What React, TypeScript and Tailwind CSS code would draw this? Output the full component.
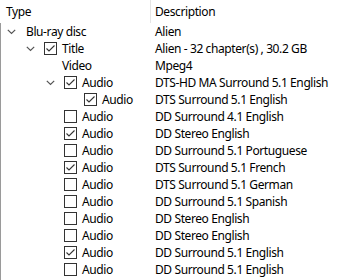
import React from "react";

interface Row {
  level: number;
  expander?: boolean;
  check?: boolean | null;
  type: string;
  desc: string;
}

const rows: Row[] = [
  { level: 0, expander: true, type: "Blu-ray disc", desc: "Alien" },
  { level: 1, expander: true, check: true, type: "Title", desc: "Alien - 32 chapter(s) , 30.2 GB" },
  { level: 1, check: null, type: "Video", desc: "Mpeg4" },
  { level: 2, expander: true, check: true, type: "Audio", desc: "DTS-HD MA Surround 5.1 English" },
  { level: 3, check: true, type: "Audio", desc: "DTS Surround 5.1 English" },
  { level: 2, check: false, type: "Audio", desc: "DD Surround 4.1 English" },
  { level: 2, check: true, type: "Audio", desc: "DD Stereo English" },
  { level: 2, check: false, type: "Audio", desc: "DD Surround 5.1 Portuguese" },
  { level: 2, check: true, type: "Audio", desc: "DTS Surround 5.1 French" },
  { level: 2, check: false, type: "Audio", desc: "DTS Surround 5.1 German" },
  { level: 2, check: false, type: "Audio", desc: "DD Surround 5.1 Spanish" },
  { level: 2, check: false, type: "Audio", desc: "DD Stereo English" },
  { level: 2, check: false, type: "Audio", desc: "DD Stereo English" },
  { level: 2, check: true, type: "Audio", desc: "DD Surround 5.1 English" },
  { level: 2, check: false, type: "Audio", desc: "DD Surround 5.1 English" },
  // only the top of this row's checkbox shows
  { level: 2, check: false, type: "", desc: "" },
];

function Chevron() {
  return (
    <svg width="9" height="6" viewBox="0 0 9 6" className="block">
      <path d="M0.8 0.8 L4.5 4.5 L8.2 0.8" fill="none" stroke="#555555" strokeWidth="1.2" />
    </svg>
  );
}

function CheckBox({ checked }: { checked: boolean }) {
  return (
    <div className="w-[13px] h-[13px] border border-[#333333] bg-white relative">
      {checked && (
        <svg width="11" height="11" viewBox="0 0 11 11" className="absolute left-0 top-0">
          <path d="M1.5 5.5 L4 8 L9.5 2.5" fill="none" stroke="#333333" strokeWidth="1.1" />
        </svg>
      )}
    </div>
  );
}

export default function App() {
  return (
    <div
      className="w-[344px] h-[280px] overflow-hidden bg-white text-[12px] tracking-[-0.4px] text-black"
      style={{ fontFamily: '"Noto Sans", "Open Sans", sans-serif' }}
    >
      <div className="flex h-[23px] items-center">
        <div className="w-[151px] h-full flex items-center pl-[6px] border-r border-[#e5e5e5]">Type</div>
        <div className="pl-[4px]">Description</div>
      </div>
      <div className="border-l border-[#9a9a9a] h-full">
        {rows.map((r, i) => (
          <div key={i} className="flex h-[17px] items-center">
            <div className="w-[150px] flex items-center shrink-0" style={{ paddingLeft: r.level * 20 - 1 }}>
              <div className="w-[20px] flex justify-center items-center">{r.expander && <Chevron />}</div>
              {r.level > 0 && (
                <div className="w-[13px] ml-[4px]">
                  {r.check !== null && r.check !== undefined && <CheckBox checked={r.check} />}
                </div>
              )}
              {r.type && <span className="ml-[5px] whitespace-nowrap leading-[17px]">{r.type}</span>}
            </div>
            {r.desc && <div className="pl-[4px] whitespace-nowrap leading-[17px]">{r.desc}</div>}
          </div>
        ))}
      </div>
    </div>
  );
}
